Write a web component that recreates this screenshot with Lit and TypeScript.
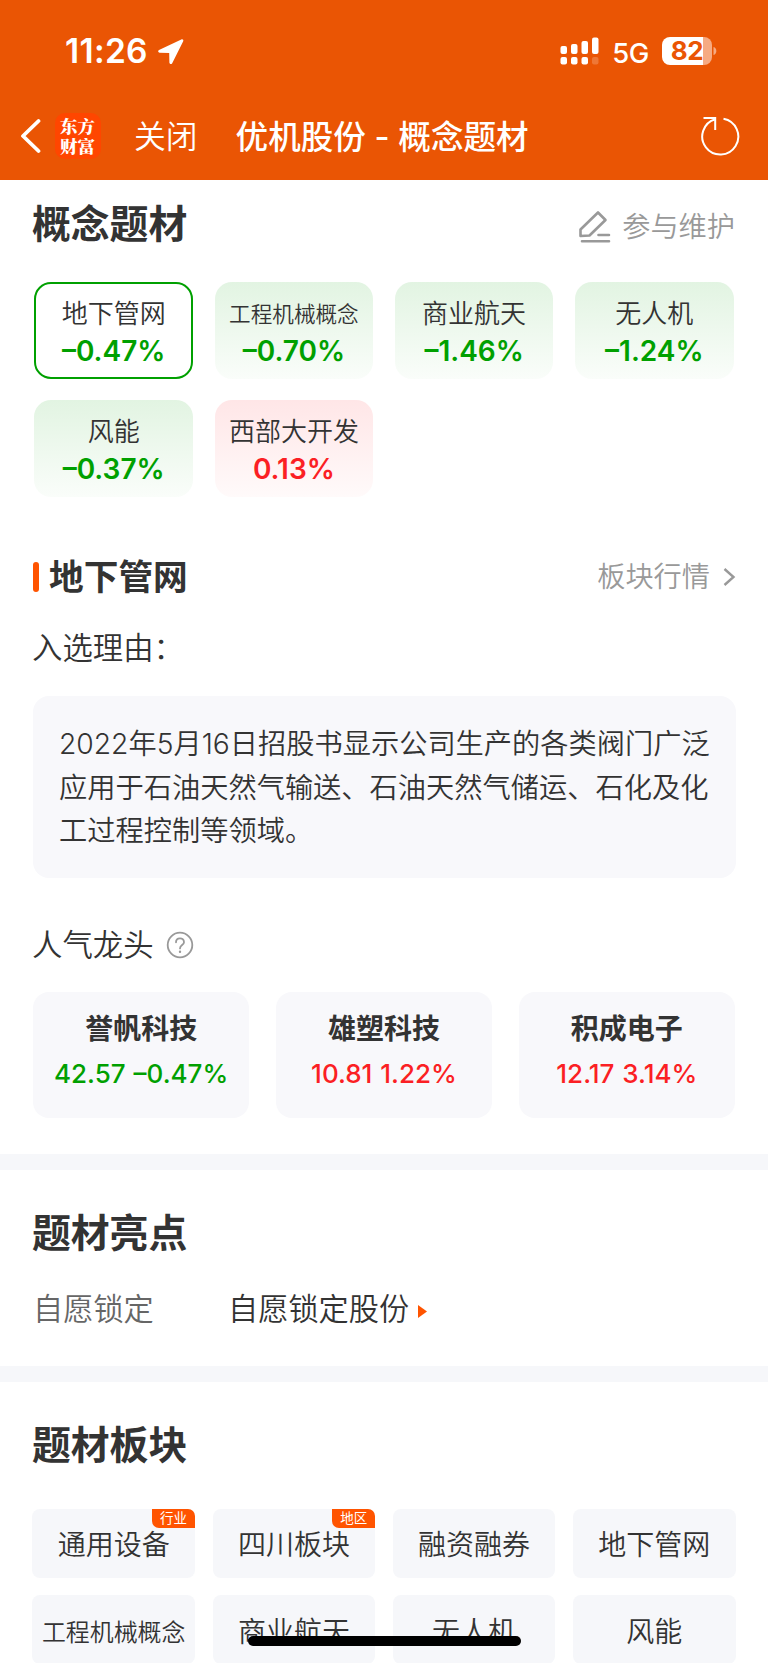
import { LitElement, html, svg, css, nothing } from "lit";
import { customElement } from "lit/decorators.js";
import { classMap } from "lit/directives/class-map.js";

interface Concept { name: string; change: string; up?: boolean; active?: boolean; small?: boolean }
interface Leader { name: string; price: string; change: string; up?: boolean }
interface Board { name: string; badge?: string; small?: boolean }

const CONCEPTS: Concept[] = [
  { name: "地下管网", change: "–0.47%", active: true },
  { name: "工程机械概念", change: "–0.70%", small: true },
  { name: "商业航天", change: "–1.46%" },
  { name: "无人机", change: "–1.24%" },
  { name: "风能", change: "–0.37%" },
  { name: "西部大开发", change: "0.13%", up: true },
];
const LEADERS: Leader[] = [
  { name: "誉帆科技", price: "42.57", change: "–0.47%" },
  { name: "雄塑科技", price: "10.81", change: "1.22%", up: true },
  { name: "积成电子", price: "12.17", change: "3.14%", up: true },
];
const BOARDS: Board[] = [
  { name: "通用设备", badge: "行业" },
  { name: "四川板块", badge: "地区" },
  { name: "融资融券" },
  { name: "地下管网" },
  { name: "工程机械概念", small: true },
  { name: "商业航天" },
  { name: "无人机" },
  { name: "风能" },
];

function signalBar(x: number, top: number, faded: boolean) {
  return svg`<rect x=${x} y=${top} width="6.5" height=${17 - top} rx="2"/>
    <rect x=${x} y="20" width="6.5" height="7.5" rx="2" opacity=${faded ? 0.2 : 1}/>`;
}

@customElement("status-bar")
class StatusBar extends LitElement {
  static styles = css`
    :host { display: flex; height: 102px; padding: 0 51px 0 65px; align-items: center; color: #fff; }
    .time { font-size: 33.5px; font-weight: 600; line-height: 40px; letter-spacing: 0.3px; }
    .arrow { margin-left: 9px; }
    .spacer { flex: 1; }
    .net { font-size: 27.5px; font-weight: 450; line-height: 34px; margin: 3px 13px 0 13px; letter-spacing: -0.4px; }
    .battery { display: flex; align-items: center; gap: 1px; }
    .cell {
      width: 50px; height: 28px; border-radius: 8px; color: #ea5504; text-align: center;
      background: linear-gradient(90deg, #fff 0 41px, #f6aa82 41px);
      font-size: 26px; line-height: 28px; font-weight: 700; letter-spacing: -0.4px;
    }
  `;
  render() {
    const xs = [0.5, 11, 21.5, 32];
    const tops = [9, 7, 4, 0.5];
    return html`
      <span class="time">11:26</span>
      <svg class="arrow" width="27" height="27" viewBox="0 0 27 27">
        <path d="M24.3 1.4 2 12.1c-1.4.8-1 2.5.6 2.6l9.6.2.2 9.700c.1 1.700 2 2 2.800.6L26.200 3.300c.6-1.400-.5-2.500-1.900-1.900z" fill="#fff"/>
      </svg>
      <span class="spacer"></span>
      <svg width="39" height="28" viewBox="0 0 39 28" fill="#fff">
        ${xs.map((x, i) => signalBar(x, tops[i], i === 3))}
      </svg>
      <span class="net">5G</span>
      <span class="battery">
        <span class="cell">82</span>
        <svg width="4" height="10" viewBox="0 0 4 10"><path d="M.5 1C4.300 2 4.300 8 .5 9z" fill="#f6aa82"/></svg>
      </span>`;
  }
}

@customElement("nav-bar")
class NavBar extends LitElement {
  static styles = css`
    :host { display: flex; height: 59px; align-items: center; color: #fff; padding: 4px 28px 5px 20px; height: 59px; }
    .logo {
      width: 46px; height: 46px; margin-left: 14px; box-sizing: border-box; padding: 3.500px 4px 0 5px;
      border-radius: 10px; background: #ff4600; word-break: break-all;
      font-family: "Noto Serif CJK SC", "Noto Sans CJK SC", serif; font-weight: 900; font-size: 17.500px; line-height: 19.500px;
    }
    .close { font-size: 31.800px; font-weight: 350; margin-left: 33px; line-height: 46px; padding-top: 2px; }
    .title { font-size: 32.600px; font-weight: 500; margin-left: 38px; line-height: 46px; white-space: pre; padding-top: 2px; }
    .spacer { flex: 1; }
  `;
  render() {
    return html`
      <svg width="21" height="36" viewBox="0 0 21 36"><path d="M18.500 3 3 18l15.500 15" fill="none" stroke="#fff" stroke-width="3.800" stroke-linecap="round" stroke-linejoin="round"/></svg>
      <span class="logo">东方财富</span>
      <span class="close">关闭</span>
      <span class="title">优机股份 - 概念题材</span>
      <span class="spacer"></span>
      <svg width="40" height="40" viewBox="0 0 40 40" fill="none" stroke="#fff" stroke-width="2">
        <path d="M23.500 2.800A18 18 0 1 1 15.300 3.200"/><path d="M3.500 2h11.700v12"/>
      </svg>`;
  }
}

@customElement("app-root")
class AppRoot extends LitElement {
  static styles = css`
    :host {
      display: block; position: relative; height: 1663px; overflow: hidden; background: #fff; color: #333;
      font-family: Inter, "Noto Sans CJK SC", sans-serif;
    }
    .top { background: #ea5504; height: 179.500px; }
    h2, h3, p { margin: 0; }
    h2 { font-size: 38.800px; font-weight: 700; line-height: 56px; }
    .head { display: flex; justify-content: space-between; align-items: center; padding: 0 33px 0 32px; }
    .concept-head { height: 56px; margin-top: 16px; }
    .link { display: flex; align-items: center; color: #999; font-size: 28.200px; font-weight: 350; line-height: 40px; }
    .edit { gap: 11px; margin-top: 6px; }
    .edit svg { margin-top: -2px; }
    .concepts { display: grid; grid-template-columns: repeat(4, 1fr); gap: 21.500px; padding: 0 34.300px; margin-top: 30.500px; }
    .concept {
      box-sizing: border-box; height: 96.500px; border-radius: 17px; display: flex; flex-direction: column;
      align-items: center; padding-top: 13px; background: linear-gradient(#e2f4e2, #fafdfa); color: #00a000;
    }
    .concept.up { background: linear-gradient(#ffe6e7, #fffafa); color: #fb1f24; }
    .concept.active { background: #fff; border: 2px solid #00a000; padding-top: 11px; }
    .cname { font-size: 26px; line-height: 38px; color: #333; font-weight: 350; }
    .cname.small { font-size: 21.600px; }
    .pct { font-size: 28px; line-height: 36px; font-weight: 600; }
    .detail-head { height: 50px; margin-top: 55px; padding-left: 33px; }
    .detail-title { display: flex; align-items: center; gap: 10px; }
    .mark { width: 6px; height: 30px; border-radius: 3px; background: #ff5400; }
    h3 { font-size: 34.700px; line-height: 50px; font-weight: 700; }
    .more { gap: 12px; margin-right: -1px; }
    .sub { display: flex; align-items: center; gap: 12px; font-size: 30.400px; line-height: 44px; padding: 0 32px; font-weight: 350; }
    .why { margin-top: 24px; }
    .reason {
      margin: 26.500px 32.500px 0 33px; box-sizing: border-box; height: 181.500px; padding: 27px 20px 0 26px; border-radius: 16px;
      background: #f8f8fb; font-size: 28.240px; line-height: 43.500px; font-weight: 350; word-break: break-all;
    }
    .pop { margin-top: 45px; }
    .leaders { display: grid; grid-template-columns: repeat(3, 1fr); gap: 26.500px; padding: 0 33px; margin-top: 25px; }
    .leader { height: 126.500px; border-radius: 16px; background: #f8f8fb; text-align: center; color: #00a000; }
    .leader.up { color: #fb1f24; }
    .lname { color: #333; font-size: 28px; font-weight: 700; line-height: 40px; padding-top: 17.500px; }
    .quote { font-size: 26px; font-weight: 550; line-height: 34px; margin-top: 8px; word-spacing: 1px; }
    .divider { height: 16.500px; background: #f6f7fa; }
    .d1 { margin-top: 35.500px; }
    .d2 { margin-top: 35px; }
    .light { margin-top: 34.500px; padding: 0 32px; }
    .fact { display: flex; align-items: center; height: 44px; margin-top: 26px; padding: 0 33px; font-size: 30.200px; line-height: 44px; }
    .key { width: 195px; color: #666; font-weight: 350; }
    .value { font-weight: 350; margin-right: 9px; }
    .tri { margin-top: 5px; }
    .boards-title { margin-top: 35px; padding: 0 32px; }
    .boards { display: grid; grid-template-columns: repeat(4, 1fr); gap: 17.500px; padding: 0 32.300px; margin-top: 36px; }
    .board {
      position: relative; box-sizing: border-box; height: 68.700px; padding-top: 4px; border-radius: 8px; background: #f6f7fa;
      display: grid; place-content: center; font-size: 28px; font-weight: 350; line-height: 40px;
    }
    .board.small { font-size: 23.900px; padding-top: 6px; }
    .badge {
      position: absolute; top: 0; right: 0; width: 43px; height: 19px; border-radius: 0 7px 0 7px; background: #ff5400;
      color: #fff; font-size: 13.500px; line-height: 19px; text-align: center; font-weight: 400;
    }
    .home { position: absolute; left: 248px; top: 1636px; width: 273px; height: 10px; border-radius: 5px; background: #000; }
  `;
  render() {
    return html`
      <header class="top"><status-bar></status-bar><nav-bar></nav-bar></header>
      <section>
        <div class="head concept-head">
          <h2>概念题材</h2>
          <span class="link edit">
            <svg width="34" height="34" viewBox="0 0 34 34" fill="none" stroke="#999" stroke-width="2.600" stroke-linecap="round" stroke-linejoin="round">
              <path d="M3.500 27V20.500L21 3.500l7.500 7.500L12.500 26.500z"/><path d="M21.500 26h10.500M5 32.200h27"/>
            </svg>参与维护</span>
        </div>
        <div class="concepts">
          ${CONCEPTS.map((c) => html`
            <div class=${classMap({ concept: true, up: !!c.up, active: !!c.active })}>
              <span class=${classMap({ cname: true, small: !!c.small })}>${c.name}</span>
              <span class="pct">${c.change}</span>
            </div>`)}
        </div>
      </section>
      <section>
        <div class="head detail-head">
          <div class="detail-title"><span class="mark"></span><h3>地下管网</h3></div>
          <span class="link more">板块行情
            <svg width="14" height="20" viewBox="0 0 14 20"><path d="M2.500 2 11.500 10l-9 8" fill="none" stroke="#999" stroke-width="2.400"/></svg>
          </span>
        </div>
        <div class="sub why">入选理由：</div>
        <p class="reason">2022年5月16日招股书显示公司生产的各类阀门广泛应用于石油天然气输送、石油天然气储运、石化及化工过程控制等领域。</p>
        <div class="sub pop">人气龙头
          <svg width="28" height="28" viewBox="0 0 28 28" fill="none" stroke="#999" stroke-width="1.800" stroke-linecap="round">
            <circle cx="14" cy="14" r="12.300"/><path d="M10 11.300C10 5.900 18 6 18 11.200C18 14 14 14.200 14 17.400"/><circle cx="14" cy="20.800" r=".6" fill="#999" stroke-width="1.200"/>
          </svg>
        </div>
        <div class="leaders">
          ${LEADERS.map((l) => html`
            <div class=${classMap({ leader: true, up: !!l.up })}>
              <div class="lname">${l.name}</div>
              <div class="quote">${l.price} ${l.change}</div>
            </div>`)}
        </div>
      </section>
      <div class="divider d1"></div>
      <section>
        <h2 class="light">题材亮点</h2>
        <div class="fact">
          <span class="key">自愿锁定</span><span class="value">自愿锁定股份</span>
          <svg class="tri" width="9" height="13" viewBox="0 0 9 13"><path d="M0 0 9 6.500 0 13z" fill="#ff5400"/></svg>
        </div>
      </section>
      <div class="divider d2"></div>
      <section>
        <h2 class="boards-title">题材板块</h2>
        <div class="boards">
          ${BOARDS.map((b) => html`
            <div class=${classMap({ board: true, small: !!b.small })}>${b.name}${b.badge ? html`<span class="badge">${b.badge}</span>` : nothing}</div>`)}
        </div>
      </section>
      <div class="home"></div>`;
  }
}
